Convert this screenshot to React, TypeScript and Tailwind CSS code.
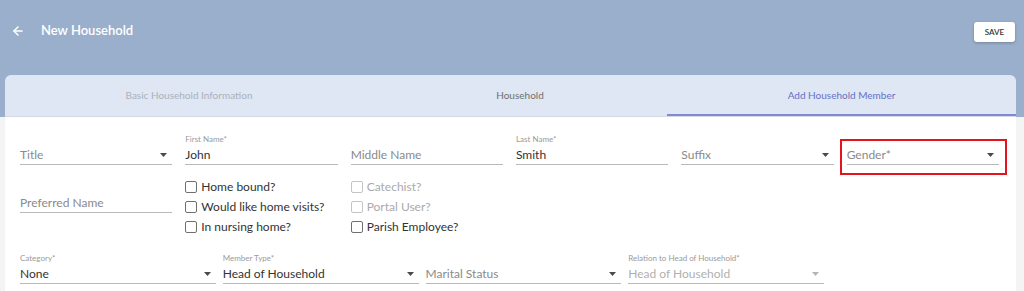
import { ArrowLeft } from "lucide-react";

const font = { fontFamily: "Lato, 'Noto Sans', sans-serif" };

function Caret({ light }: { light?: boolean }) {
  return (
    <svg width="7" height="4" viewBox="0 0 7 4" className="shrink-0">
      <path d="M0 0 L7 0 L3.5 4 Z" fill={light ? "#b5b5b5" : "#4a4a4a"} />
    </svg>
  );
}

function Field({
  label,
  value,
  placeholder,
  select,
  disabled,
}: {
  label?: string;
  value?: string;
  placeholder?: string;
  select?: boolean;
  disabled?: boolean;
}) {
  return (
    <div className="flex flex-col">
      <div className="h-[12px] text-[8px] leading-[12px] text-[#9a9a9a]">{label}</div>
      <div className="flex h-[20px] items-center justify-between border-b border-[#b9b9b9] pr-[5px]">
        {value ? (
          <span className={disabled ? "text-[12px] text-[#b0b0b0]" : "text-[12px] text-[#333]"}>
            {value}
          </span>
        ) : (
          <span className="text-[12px] text-[#8a8a8a]">{placeholder}</span>
        )}
        {select && <Caret light={disabled} />}
      </div>
    </div>
  );
}

function Check({ label, disabled }: { label: string; disabled?: boolean }) {
  return (
    <div className="flex h-[20px] items-center gap-[4px]">
      <div
        className={
          disabled
            ? "h-[12px] w-[12px] rounded-[2px] border border-[#c4c4c4]"
            : "h-[12px] w-[12px] rounded-[2px] border border-[#6f6f6f]"
        }
      />
      <span className={disabled ? "text-[12px] text-[#aaa]" : "text-[12px] text-[#333]"}>
        {label}
      </span>
    </div>
  );
}

export default function App() {
  return (
    <div className="h-[291px] w-[1024px] overflow-hidden bg-[#f4f4f4]" style={font}>
      <div className="bg-[#9aafcb]">
        <header className="flex h-[75px] items-start justify-between pl-[11px] pr-[9px]">
          <div className="mt-[21px] flex items-center gap-[16px]">
            <ArrowLeft size={14} strokeWidth={2.6} className="text-white" />
            <h1 className="text-[13px] font-semibold text-white">New Household</h1>
          </div>
          <button className="mt-[22px] flex h-[20px] w-[41px] items-center justify-center rounded-[3px] bg-white text-[8px] font-semibold text-[#333] shadow-[0_1px_3px_rgba(0,0,0,0.25)]">
            SAVE
          </button>
        </header>
        <div className="px-[5px]">
          <nav className="flex h-[42px] w-[1011px] rounded-t-[6px] border-b border-[#d4d9e2] bg-[#dee7f3] text-[10px]">
            <div className="flex w-[368px] items-center justify-center text-[#aab1bd]">
              Basic Household Information
            </div>
            <div className="flex w-[294px] items-center justify-center text-[#6f6f6f]">
              Household
            </div>
            <div className="flex flex-1 items-center justify-center border-b-2 border-[#7f89d4] pt-[2px] text-[#6670c6]">
              Add Household Member
            </div>
          </nav>
        </div>
      </div>

      <div className="ml-[5px] h-[174px] w-[1011px] bg-white pl-[15px] pr-[17px] pt-[16px]">
        <div className="grid grid-cols-6 gap-x-[13px]">
          <Field placeholder="Title" select />
          <Field label="First Name*" value="John" />
          <Field placeholder="Middle Name" />
          <Field label="Last Name*" value="Smith" />
          <Field placeholder="Suffix" select />
          <div className="relative">
            <Field placeholder="Gender*" select />
            <div className="absolute -bottom-[10px] -left-[7px] -right-[8px] top-[6px] border-2 border-[#e3151c]" />
          </div>
        </div>

        <div className="mt-[12px] grid grid-cols-6 gap-x-[13px]">
          <div className="pt-[4px]">
            <Field placeholder="Preferred Name" />
          </div>
          <div className="flex flex-col">
            <Check label="Home bound?" />
            <Check label="Would like home visits?" />
            <Check label="In nursing home?" />
          </div>
          <div className="flex flex-col">
            <Check label="Catechist?" disabled />
            <Check label="Portal User?" disabled />
            <Check label="Parish Employee?" />
          </div>
        </div>

        <div className="mt-[15px] grid w-[804px] grid-cols-4 gap-x-[7px]">
          <Field label="Category*" value="None" select />
          <Field label="Member Type*" value="Head of Household" select />
          <Field placeholder="Marital Status" select />
          <Field label="Relation to Head of Household*" value="Head of Household" select disabled />
        </div>
      </div>
    </div>
  );
}
